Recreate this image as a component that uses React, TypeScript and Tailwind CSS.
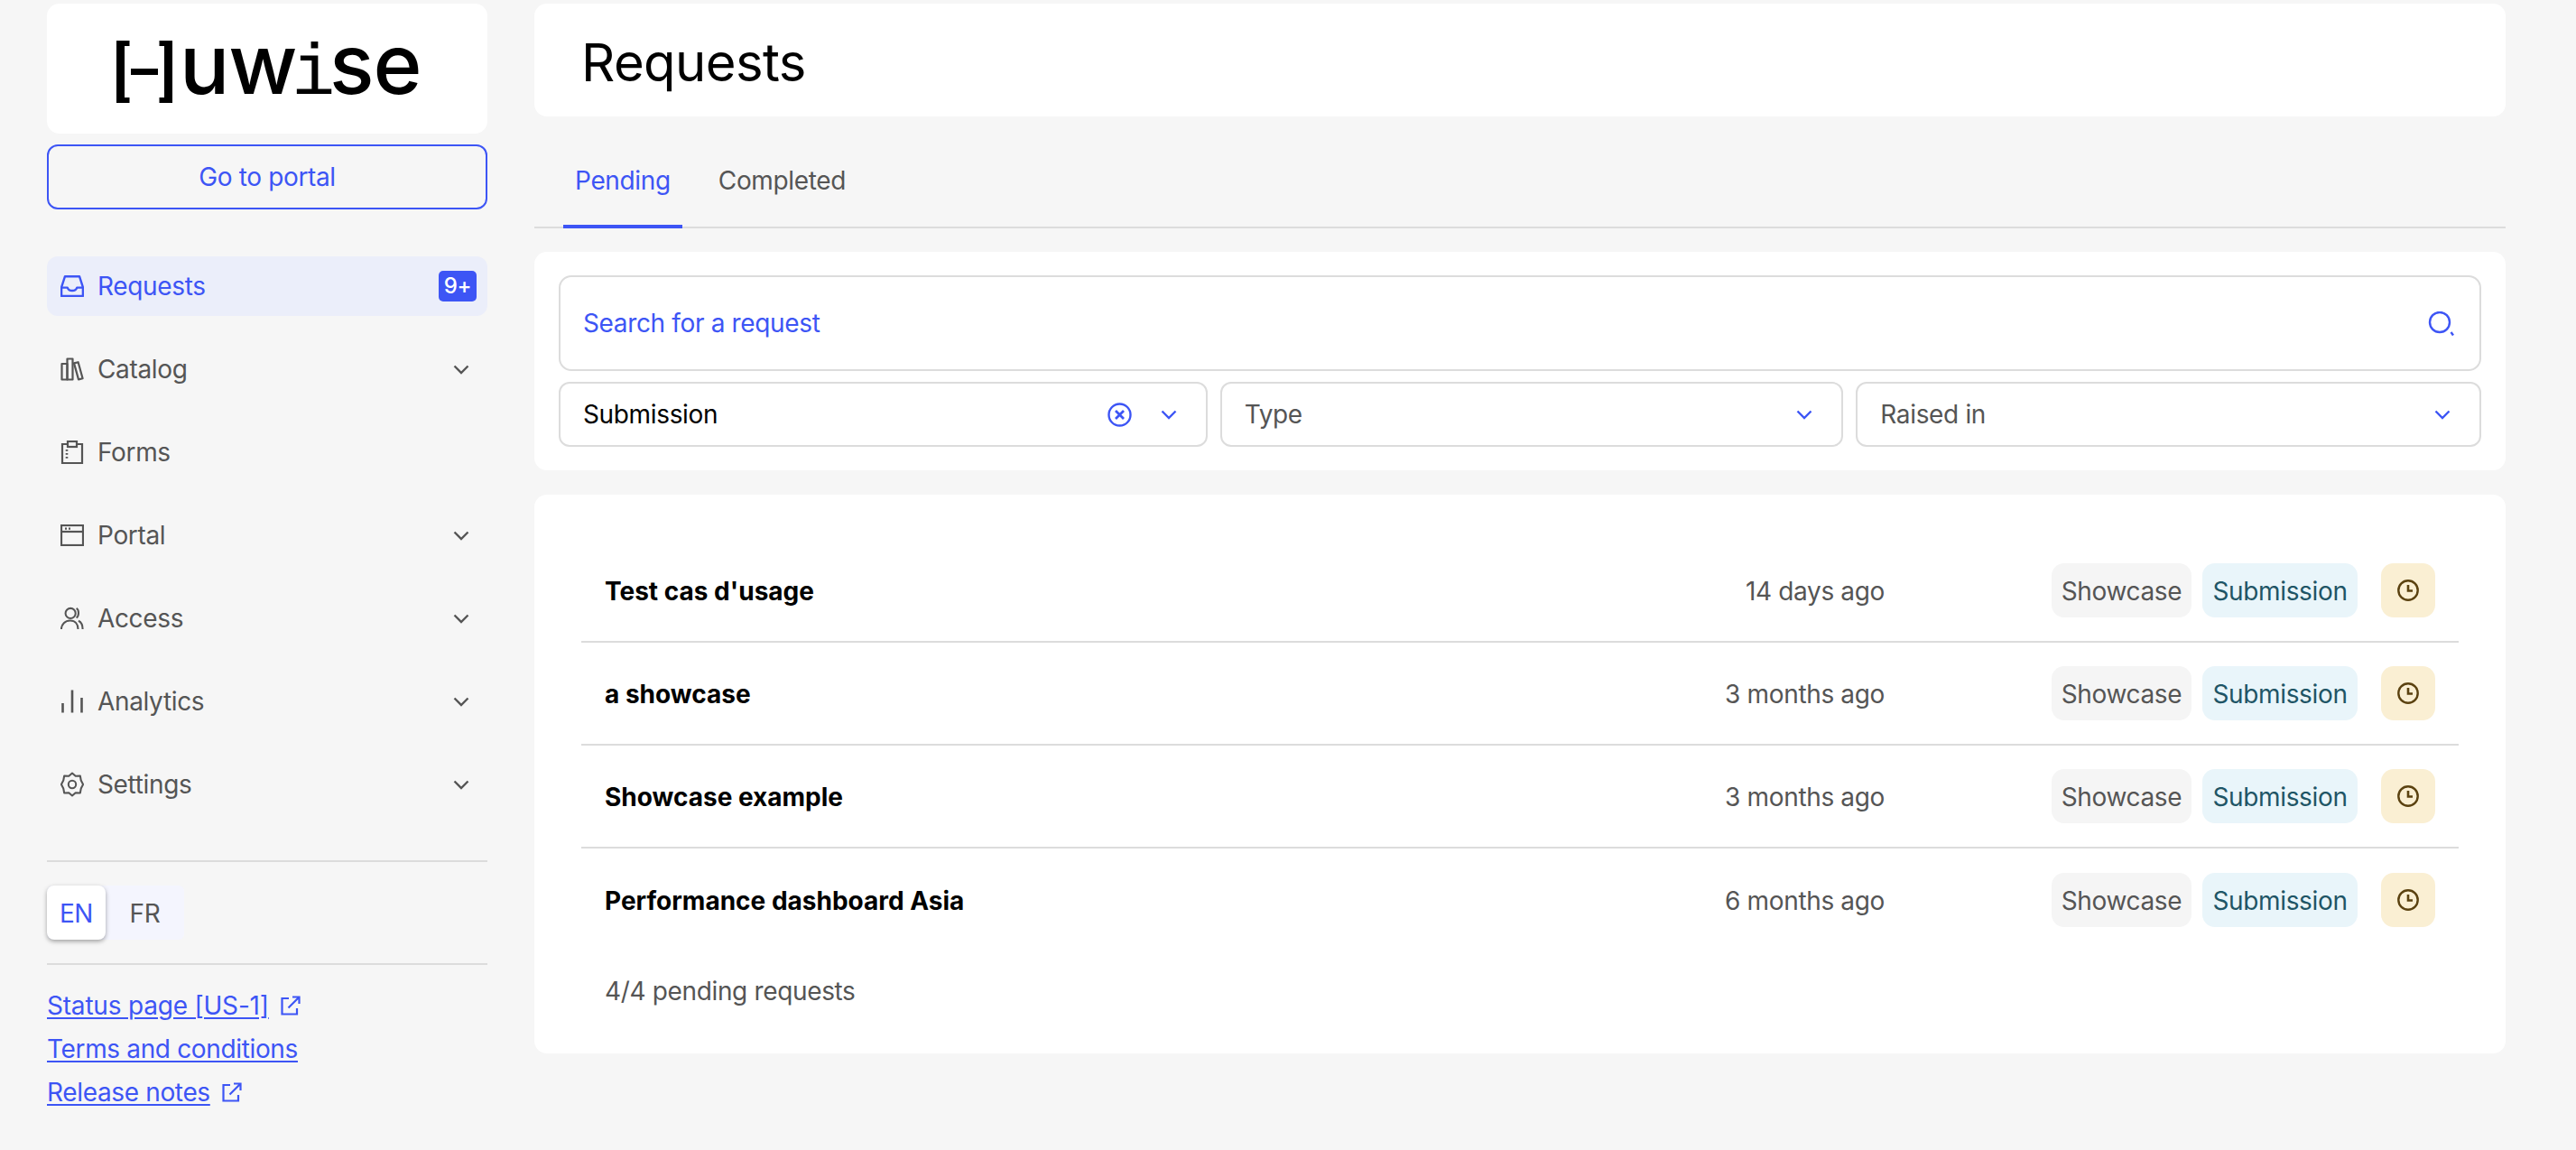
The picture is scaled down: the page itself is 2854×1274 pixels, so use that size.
import React from 'react';

const ChevronDown = ({ className }: { className: string }) => (
  <svg width="18" height="11" viewBox="0 0 18 11" fill="none" stroke="currentColor" strokeWidth="2.4" className={className}>
    <path d="M1.5 1.5 9 9l7.5-7.5" />
  </svg>
);

const InboxIcon = () => (
  <svg width="26" height="24" viewBox="0 0 26 24" fill="none" stroke="currentColor" strokeWidth="2.4" strokeLinejoin="round">
    <path d="M5 1.2h16l3.9 12V23H1.1v-9.8z" />
    <path d="M1.1 13.6h6.600c1.600 4.600 9 4.600 10.600 0h6.600" />
  </svg>
);

const CatalogIcon = () => (
  <svg width="26" height="26" viewBox="0 0 26 26" fill="none" stroke="currentColor" strokeWidth="2.2" strokeLinejoin="round">
    <rect x="1.5" y="7" width="6" height="17.5" />
    <rect x="7.5" y="1.5" width="6" height="23" />
    <path d="m15 6.400 4.600-1.200 5 18-4.600 1.200z" />
  </svg>
);

const FormsIcon = () => (
  <svg width="26" height="26" viewBox="0 0 26 26" fill="none" stroke="currentColor" strokeWidth="2.2">
    <path d="M8 4H2v21h22V4h-6" />
    <rect x="8" y="1" width="10" height="6" />
    <path d="M7 10v1.800M7 14v1.800M7 18v1.800" strokeWidth="2.600" />
  </svg>
);

const PortalIcon = () => (
  <svg width="26" height="24" viewBox="0 0 26 24" fill="none" stroke="currentColor" strokeWidth="2.2">
    <rect x="1" y="1" width="24" height="22" />
    <path d="M1 8h24" />
    <path d="M5 4.600h2M9 4.600h2" />
  </svg>
);

const AccessIcon = () => (
  <svg width="28" height="28" viewBox="0 0 28 28" fill="none" stroke="currentColor" strokeWidth="2.2">
    <circle cx="12" cy="8" r="6" />
    <path d="M1 27c0-6 4.600-10.400 10.600-10.400S21 21 21 27" />
    <path d="M19 2c3.400 1.800 3.400 9 0 11.500" />
    <path d="M21.500 17c3 1.500 5 5.500 5 10" />
  </svg>
);

const AnalyticsIcon = () => (
  <svg width="26" height="26" viewBox="0 0 26 26" fill="none" stroke="currentColor" strokeWidth="2.6">
    <path d="M2.500 25.500V15M13 25.500V.5M23.500 25.500V9" />
  </svg>
);

const SettingsIcon = () => (
  <svg width="28" height="30" viewBox="0 0 28 30" fill="none" stroke="currentColor" strokeWidth="2.2" strokeLinejoin="round">
    <path d="m14 1.500 4 3.500 5.500-.2 1 5.300 2.500 4.900-2.500 4.900-1 5.300-5.500-.2-4 3.500-4-3.500-5.500.2-1-5.300L1 15l2.500-4.900 1-5.300L10 5z" />
    <circle cx="14" cy="15" r="4.500" />
  </svg>
);

const ExternalIcon = () => (
  <svg width="22" height="22" viewBox="0 0 22 22" fill="none" stroke="currentColor" strokeWidth="2.2">
    <path d="M9 3H1.500v17.500H18V14" />
    <path d="M8.500 13.500 20.500 1.500M13 1.500h7.500V9" />
  </svg>
);

const ClockIcon = () => (
  <svg width="24" height="24" viewBox="0 0 24 24" fill="none" stroke="currentColor" strokeWidth="2.4">
    <circle cx="12" cy="12" r="10.700" />
    <path d="M12 6v6.500h5" strokeWidth="2.600" />
  </svg>
);

const nav = [
  { label: 'Requests', icon: <InboxIcon />, active: true },
  { label: 'Catalog', icon: <CatalogIcon />, chevron: true },
  { label: 'Forms', icon: <FormsIcon /> },
  { label: 'Portal', icon: <PortalIcon />, chevron: true },
  { label: 'Access', icon: <AccessIcon />, chevron: true },
  { label: 'Analytics', icon: <AnalyticsIcon />, chevron: true },
  { label: 'Settings', icon: <SettingsIcon />, chevron: true },
];

const rows = [
  { title: "Test cas d'usage", when: '14 days ago' },
  { title: 'a showcase', when: '3 months ago' },
  { title: 'Showcase example', when: '3 months ago' },
  { title: 'Performance dashboard Asia', when: '6 months ago' },
];

// brackets are a drawing, the wordmark stays real text
const Logo = () => (
  <div className="h-[144px] bg-white rounded-[14px] flex items-center pl-[77px]">
    <div className="flex items-center text-black">
      <svg width="62" height="69" viewBox="0 0 62 69" fill="black" className="mt-[6px] mr-[8px] shrink-0">
        <path d="M0 0h14.500v6H9v57h5.500v6H0z" />
        <rect x="16" y="31" width="30" height="7" />
        <path d="M47.500 0H62v69H47.500v-6H53V6h-5.500z" />
      </svg>
      <span className="font-['Inter',sans-serif] font-medium text-[92px] leading-none tracking-[-1.2px] mt-[-4px] whitespace-nowrap">
        uw<span className="font-['Liberation_Mono',monospace] font-normal text-[80px] mx-[-5px]">i</span>se
      </span>
    </div>
  </div>
);

export default function App() {
  return (
    <div className="min-h-[1274px] bg-[#f6f6f6] flex items-start pt-[4px] pl-[52px] font-['Inter',sans-serif] text-[28px] leading-[40px] tracking-[-0.35px] text-[#555555]">
      {/* sidebar */}
      <aside className="w-[488px] shrink-0">
        <Logo />
        <button className="mt-[12px] w-full h-[72px] rounded-[12px] border-2 border-[#3d55f5] text-[#3d55f5]">Go to portal</button>

        <nav className="mt-[52px] flex flex-col gap-[26px]">
          {nav.map((item) => (
            <div
              key={item.label}
              className={
                item.active
                  ? 'h-[66px] rounded-[12px] bg-[#ebeefa] text-[#3d55f5] flex items-center pl-[15px] pr-[12px]'
                  : 'h-[66px] rounded-[12px] flex items-center pl-[15px] pr-[20px]'
              }
            >
              <span className="w-[26px] flex justify-center shrink-0">{item.icon}</span>
              <span className="ml-[15px] flex-1">{item.label}</span>
              {item.active && (
                <span className="w-[42px] h-[34px] rounded-[5px] bg-[#3d55f5] text-white text-[24px] leading-[34px] text-center font-medium">9+</span>
              )}
              {item.chevron && <ChevronDown className="text-[#555555]" />}
            </div>
          ))}
        </nav>

        <div className="mt-[51px] h-[2px] bg-[#dcdcdc]" />
        <div className="mt-[26px] flex h-[60px] w-[152px] bg-[#f4f5fe] rounded-[6px]">
          <div className="w-[65px] h-full pt-[2px] bg-white rounded-[8px] text-[#3d55f5] flex items-center justify-center shadow-[0_2px_5px_rgba(0,0,0,0.35)]">EN</div>
          <div className="flex-1 pt-[2px] flex items-center justify-center">FR</div>
        </div>
        <div className="mt-[26px] h-[2px] bg-[#dcdcdc]" />

        <div className="mt-[25px] flex flex-col gap-[8px] text-[#3d55f5]">
          <div className="flex items-center gap-[13px]">
            <a className="underline underline-offset-[3px] decoration-2 tracking-[-0.2px]">Status page [US-1]</a>
            <ExternalIcon />
          </div>
          <div>
            <a className="underline underline-offset-[3px] decoration-2">Terms and conditions</a>
          </div>
          <div className="flex items-center gap-[13px]">
            <a className="underline underline-offset-[3px] decoration-2">Release notes</a>
            <ExternalIcon />
          </div>
        </div>
      </aside>

      {/* main */}
      <main className="ml-[52px] w-[2184px] shrink-0">
        <div className="h-[125px] bg-white rounded-[14px] flex items-center pl-[52px]">
          <h1 className="text-[58px] leading-[70px] tracking-[-0.6px] text-black pt-[4px]">Requests</h1>
        </div>

        <div className="h-[124px] border-b-2 border-[#dcdcdc] flex items-end pl-[32px] gap-[27px]">
          <div className="h-[106px] px-[13px] text-[#3d55f5] border-b-4 border-[#3d55f5] mb-[-2px] pt-[33px]">Pending</div>
          <div className="h-[106px] px-[13px] mb-[-2px] pt-[33px]">Completed</div>
        </div>

        <section className="mt-[26px] bg-white rounded-[14px] px-[27px] py-[26px]">
          <div className="h-[106px] rounded-[14px] border-2 border-[#dcdcdc] flex items-center justify-between pl-[25px] pr-[27px] text-[#3d55f5]">
            <span>Search for a request</span>
            <svg width="30" height="27" viewBox="0 0 30 27" fill="none" stroke="currentColor" strokeWidth="2.400">
              <circle cx="13" cy="12" r="11" />
              <path d="m25.500 23 2.500 3.500" />
            </svg>
          </div>
          <div className="mt-[12px] flex gap-[14px]">
            <div className="w-[719px] h-[72px] rounded-[12px] border-2 border-[#dcdcdc] flex items-center pl-[25px] pr-[32px] text-black">
              <span className="flex-1">Submission</span>
              <svg width="27" height="27" viewBox="0 0 27 27" fill="none" stroke="#3d55f5" strokeWidth="2.400" className="mr-[32px]">
                <circle cx="13.500" cy="13.500" r="12" />
                <path d="m9 9 9 9m0-9-9 9" strokeWidth="2.800" />
              </svg>
              <ChevronDown className="text-[#3d55f5]" />
            </div>
            <div className="w-[691px] h-[72px] rounded-[12px] border-2 border-[#dcdcdc] flex items-center justify-between pl-[25px] pr-[32px]">
              <span>Type</span>
              <ChevronDown className="text-[#3d55f5]" />
            </div>
            <div className="w-[693px] h-[72px] rounded-[12px] border-2 border-[#dcdcdc] flex items-center justify-between pl-[25px] pr-[32px]">
              <span>Raised in</span>
              <ChevronDown className="text-[#3d55f5]" />
            </div>
          </div>
        </section>

        <section className="mt-[27px] h-[619px] bg-white rounded-[14px] pt-[50px] px-[52px]">
          {rows.map((row, i) => (
            <div
              key={row.title}
              className={
                i < rows.length - 1
                  ? 'h-[114px] border-b-2 border-[#dcdcdc] flex items-center px-[26px]'
                  : 'h-[114px] flex items-center px-[26px]'
              }
            >
              <span className="flex-1 pt-[2px] font-bold tracking-normal text-black">{row.title}</span>
              <span className="mr-[185px] pt-[2px]">{row.when}</span>
              <span className="h-[60px] w-[155px] pt-[2px] rounded-[14px] bg-[#f5f5f5] flex items-center justify-center">Showcase</span>
              <span className="ml-[12px] h-[60px] w-[172px] pt-[2px] rounded-[14px] bg-[#e9f5fa] text-[#1f5566] flex items-center justify-center">Submission</span>
              <span className="ml-[26px] h-[60px] w-[60px] rounded-[14px] bg-[#faefd3] text-[#5b4210] flex items-center justify-center">
                <ClockIcon />
              </span>
            </div>
          ))}
          <div className="mt-[24px] pl-[26px]">4/4 pending requests</div>
        </section>
      </main>
    </div>
  );
}
